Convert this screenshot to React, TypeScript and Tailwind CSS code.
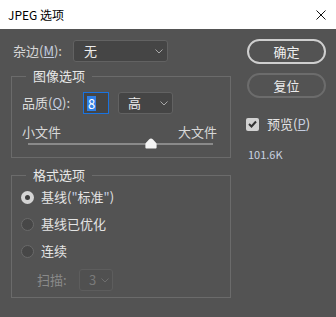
import React from "react";

const font = "font-['Noto_Sans_CJK_SC',sans-serif]";

function Chevron({ color }: { color: string }) {
  return (
    <svg width="8" height="5" viewBox="0 0 8 5" fill="none">
      <path d="M0.5 0.5 L4 4 L7.5 0.5" stroke={color} strokeWidth="1" />
    </svg>
  );
}

function Radio({ checked, label }: { checked?: boolean; label: React.ReactNode }) {
  return (
    <div className="flex h-[16px] items-center">
      {checked ? (
        <span className="flex h-[13px] w-[13px] items-center justify-center rounded-full bg-[#d4d4d4]">
          <span className="h-[5px] w-[5px] rounded-full bg-[#3c3c3c]" />
        </span>
      ) : (
        <span className="h-[13px] w-[13px] rounded-full border border-[#6a6a6a] bg-[#474747]" />
      )}
      <span className="ml-[7px] text-[13px] leading-[16px] text-[#e4e4e4]">{label}</span>
    </div>
  );
}

export default function App() {
  return (
    <div className={`h-[317px] w-[336px] overflow-hidden ${font}`}>
      <div className="flex h-[29px] items-center justify-between bg-white pl-[8px] pr-[10px]">
        <span className="text-[12px] leading-[16px] text-black">JPEG 选项</span>
        <svg width="10" height="10" viewBox="0 0 10 10">
          <path d="M0.5 0.5 L9.5 9.5 M9.5 0.5 L0.5 9.5" stroke="#111" strokeWidth="1" />
        </svg>
      </div>

      <div className="flex h-[288px] bg-[#535353] pl-[11px]">
        {/* left column */}
        <div className="flex w-[220px] flex-col pt-[11px]">
          <div className="flex h-[22px] items-center">
            <span className="ml-[2px] w-[60px] text-[13px] leading-[16px] text-[#d6d6d6]">
              杂边(<span className="text-[#c4cde0] underline">M</span>):
            </span>
            <div className="flex h-[22px] w-[95px] items-center justify-between rounded-[3px] border border-[#626262] bg-[#454545] pl-[10px] pr-[4px]">
              <span className="text-[13px] leading-[16px] text-[#ececec]">无</span>
              <Chevron color="#a8a8a8" />
            </div>
          </div>

          <fieldset className="mt-[6px] w-[220px] border border-[#6b6b6b] px-[10px] pb-[8px] pt-[8px]">
            <legend className="ml-[4px] px-[7px] text-[13px] leading-[16px] text-[#e8e8e8]">图像选项</legend>
            <div className="flex h-[22px] items-center">
              <span className="w-[61px] text-[13px] leading-[16px] text-[#dcdcdc]">
                品质(<span className="text-[#c4cde0] underline">Q</span>):
              </span>
              <div className="flex h-[22px] w-[26px] items-center border border-[#1a73e0] bg-[#454545] pl-[3px]">
                <span className="bg-[#2f7fe6] px-[1px] text-[13px] leading-[15px] text-white">8</span>
              </div>
              <div className="ml-[9px] flex h-[22px] w-[55px] items-center justify-between rounded-[3px] border border-[#626262] bg-[#454545] pl-[9px] pr-[4px]">
                <span className="text-[13px] leading-[16px] text-[#ececec]">高</span>
                <Chevron color="#a8a8a8" />
              </div>
            </div>
            <div className="mt-[10px] flex justify-between pr-[3px] text-[13px] leading-[16px] text-[#d8d8d8]">
              <span>小文件</span>
              <span>大文件</span>
            </div>
            <div className="relative ml-[6px] mt-[-2px] flex h-[11px] w-[185px] items-center">
              <div className="h-[2px] w-full bg-[#8a8a8a]" />
              <svg className="absolute left-[117px] top-0" width="12" height="11" viewBox="0 0 12 11">
                <path d="M6 0.5 Q7 0.5 8 1.6 L11.2 5 Q11.6 5.5 11.6 6.2 L11.6 9.6 Q11.6 10.5 10.7 10.5 L1.3 10.5 Q0.4 10.5 0.4 9.6 L0.4 6.2 Q0.4 5.5 0.8 5 L4 1.6 Q5 0.5 6 0.5 Z" fill="#f4f4f4" />
              </svg>
            </div>
          </fieldset>

          <fieldset className="mt-[9px] w-[220px] border border-[#6b6b6b] px-[9px] pb-[6px] pt-[6px]">
            <legend className="ml-[5px] px-[7px] text-[13px] leading-[16px] text-[#e8e8e8]">格式选项</legend>
            <div className="flex flex-col gap-[11px]">
              <Radio
                checked
                label={
                  <>
                    基线(<span className="text-[#c4cde0]">"</span>标准<span className="text-[#c4cde0]">"</span>)
                  </>
                }
              />
              <Radio label="基线已优化" />
              <Radio label="连续" />
            </div>
            <div className="ml-[16px] mt-[10px] flex h-[22px] items-center">
              <span className="w-[42px] text-[13px] leading-[16px] text-[#8a8a8a]">扫描:</span>
              <div className="flex h-[22px] w-[34px] items-center justify-between rounded-[3px] border border-[#5d5d5d] bg-[#505050] pl-[9px] pr-[3px]">
                <span className="text-[13px] leading-[16px] text-[#7a7a7a]">3</span>
                <Chevron color="#6e6e6e" />
              </div>
            </div>
          </fieldset>
        </div>

        {/* right column */}
        <div className="ml-[16px] flex flex-col pt-[10px]">
          <button className="flex h-[25px] w-[79px] items-center justify-center rounded-full border-2 border-[#cfcfcf] text-[13px] leading-[16px] text-[#f0f0f0]">
            确定
          </button>
          <button className="mt-[9px] flex h-[25px] w-[79px] items-center justify-center rounded-full border-2 border-[#6c6c6c] text-[13px] leading-[16px] text-[#ececec]">
            复位
          </button>
          <div className="ml-[-1px] mt-[18px] flex h-[16px] items-center">
            <span className="flex h-[13px] w-[13px] items-center justify-center rounded-[2px] bg-[#d2d2d2]">
              <svg width="9" height="8" viewBox="0 0 9 8">
                <path d="M1 4 L3.5 6.5 L8 1.5" stroke="#333" strokeWidth="2" fill="none" />
              </svg>
            </span>
            <span className="ml-[8px] text-[13px] leading-[16px] text-[#e4e4e4]">
              预览(<span className="text-[#c4cde0] underline">P</span>)
            </span>
          </div>
          <span className="ml-[1px] mt-[15px] text-[11px] leading-[14px] text-[#c8d2e0]">101.6K</span>
        </div>
      </div>
    </div>
  );
}
